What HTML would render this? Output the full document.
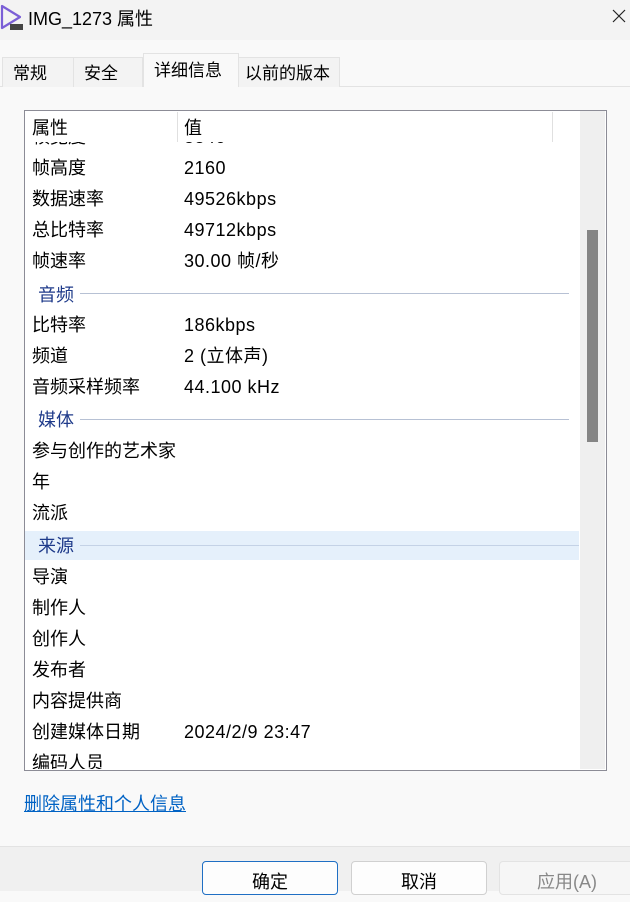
<!DOCTYPE html>
<html><head><meta charset="utf-8"><style>
*{margin:0;padding:0;box-sizing:border-box}
body{width:630px;height:891px;overflow:hidden;background:#f9f9f9;font-family:"Liberation Sans","Noto Sans CJK SC",sans-serif;color:#000;position:relative}
.a{position:absolute;white-space:nowrap}
.tab{position:absolute;top:57px;height:30px;border:1px solid #e3e3e3;border-bottom:none;background:#f3f3f3;font-size:17px;line-height:32px;padding-left:10px}
.row{position:absolute;left:32px;font-size:18px;line-height:22px}
.v{position:absolute;left:184px;font-size:18px;line-height:22px;letter-spacing:0.5px}
.sec{position:absolute;left:38px;font-size:18px;line-height:22px;color:#1e3a8a}
.ln{position:absolute;height:1px;background:#b7c1d4}
.btn{position:absolute;top:861px;height:34px;width:136px;border:1px solid #d0d0d0;border-radius:4px;background:#fdfdfd;text-align:center;font-size:18px;line-height:40px}
</style></head><body>
<div class="a" style="left:0;top:0;width:630px;height:40px;background:#f3f3f3"></div>
<svg class="a" style="left:0;top:4px" width="26" height="28" viewBox="0 0 26 28"><path d="M2 2 L20 13 L2 24 Z" fill="none" stroke="#7b5fd6" stroke-width="2.2" stroke-linejoin="round"/><rect x="10" y="20" width="13" height="6" fill="#444"/></svg>
<div class="a" style="left:28px;top:8px;font-size:18px;line-height:22px">IMG_1273 属性</div>
<svg class="a" style="left:612px;top:9px" width="14" height="14" viewBox="0 0 14 14"><path d="M1 1L13 13M13 1L1 13" stroke="#222" stroke-width="1.2"/></svg>
<div class="a" style="left:0;top:86px;width:630px;height:1px;background:#e3e3e3"></div>
<div class="tab" style="left:2px;width:72px">常规</div>
<div class="tab" style="left:73px;width:70px">安全</div>
<div class="tab" style="left:143px;top:53px;height:34px;width:96px;background:#f9f9f9;line-height:34px">详细信息</div>
<div class="tab" style="left:238px;width:102px;padding-left:6px">以前的版本</div>
<div class="a" style="left:24px;top:110px;width:583px;height:661px;border:1px solid #8c8c96;background:#fff"></div>
<div class="a" style="left:580px;top:111px;width:25px;height:658px;background:#efefef"></div>
<div class="a" style="left:587px;top:230px;width:11px;height:212px;background:#858585"></div>
<div class="a" style="left:552px;top:112px;width:1px;height:30px;background:#e0e0e0"></div>
<div class="a" style="left:177px;top:112px;width:1px;height:30px;background:#e0e0e0"></div>
<div class="row" style="top:117px">属性</div><div class="v" style="top:117px">值</div>
<div class="a" style="left:25px;top:142px;width:554px;height:4px;overflow:hidden"><div class="row" style="top:-16px;left:7px">帧宽度</div><div class="v" style="top:-16px;left:159px">3840</div></div>
<div class="row" style="top:157px">帧高度</div><div class="v" style="top:157px">2160</div>
<div class="row" style="top:188px">数据速率</div><div class="v" style="top:188px">49526kbps</div>
<div class="row" style="top:219px">总比特率</div><div class="v" style="top:219px">49712kbps</div>
<div class="row" style="top:250px">帧速率</div><div class="v" style="top:250px">30.00 帧/秒</div>
<div class="sec" style="top:284px">音频</div><div class="ln" style="left:80px;top:293px;width:489px"></div>
<div class="row" style="top:314px">比特率</div><div class="v" style="top:314px">186kbps</div>
<div class="row" style="top:345px">频道</div><div class="v" style="top:345px">2 (立体声)</div>
<div class="row" style="top:376px">音频采样频率</div><div class="v" style="top:376px">44.100 kHz</div>
<div class="sec" style="top:409px">媒体</div><div class="ln" style="left:80px;top:419px;width:489px"></div>
<div class="row" style="top:440px">参与创作的艺术家</div>
<div class="row" style="top:471px">年</div>
<div class="row" style="top:502px">流派</div>
<div class="a" style="left:25px;top:531px;width:554px;height:29px;background:#e5f0fb"></div>
<div class="sec" style="top:535px">来源</div><div class="ln" style="left:80px;top:545px;width:499px;background:#c4d2e6"></div>
<div class="row" style="top:566px">导演</div>
<div class="row" style="top:597px">制作人</div>
<div class="row" style="top:628px">创作人</div>
<div class="row" style="top:659px">发布者</div>
<div class="row" style="top:690px">内容提供商</div>
<div class="row" style="top:721px">创建媒体日期</div><div class="v" style="top:721px">2024/2/9 23:47</div>
<div class="a" style="left:25px;top:750px;width:554px;height:19px;overflow:hidden"><div class="row" style="top:2px;left:7px">编码人员</div></div>
<div class="a" style="left:24px;top:793px;font-size:18px;line-height:22px;color:#0062c4;text-decoration:underline">删除属性和个人信息</div>
<div class="a" style="left:0;top:846px;width:630px;height:45px;background:#f0f0f0;border-top:1px solid #e3e3e3"></div>
<div class="btn" style="left:202px;border-color:#1f6fc4">确定</div>
<div class="btn" style="left:351px">取消</div>
<div class="btn" style="left:499px;background:#f6f6f6;color:#888;border-color:#e3e3e3">应用(A)</div>
</body></html>
